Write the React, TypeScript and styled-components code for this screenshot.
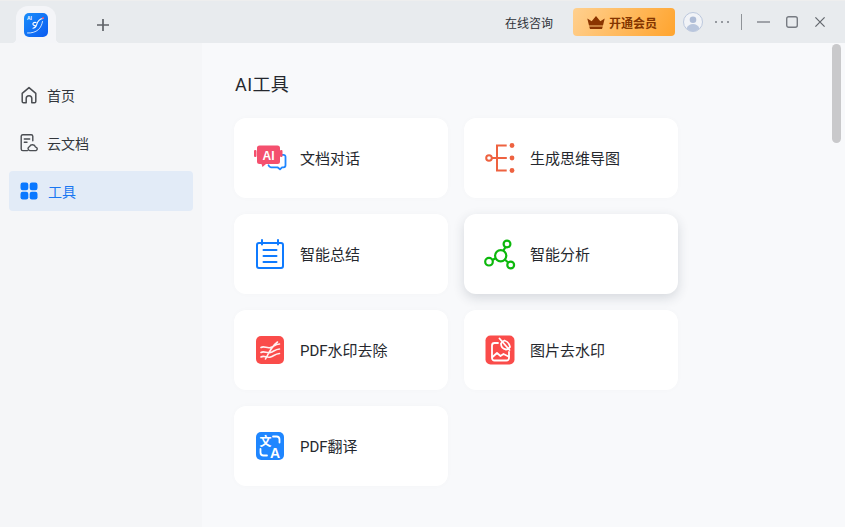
import React from "react";
import styled, { createGlobalStyle } from "styled-components";

const GlobalStyle = createGlobalStyle`
    html, body {
        margin: 0;
        padding: 0;
        height: 100%;
        overflow: hidden;
    }
    body {
        font-family: "Liberation Sans", "Noto Sans CJK SC", sans-serif;
        color: #2b2f36;
    }
`;

const Page = styled.div`
    width: 845px;
    height: 527px;
    display: flex;
    flex-direction: column;
    background-color: #f8f9fb;
`;

const TitleBar = styled.header`
    height: 43px;
    flex: none;
    display: flex;
    align-items: center;
    background-color: #e8ebee;
    border-top: 1px solid #eeeeee;
    box-sizing: border-box;
`;

const AppTab = styled.div`
    width: 40px;
    height: 37px;
    margin-left: 16px;
    align-self: flex-end;
    display: flex;
    justify-content: center;
    padding-top: 7px;
    box-sizing: border-box;
    background-color: #f4f5f8;
    border-radius: 12px 12px 0 0;
    position: relative;
    &::before, &::after {
        content: "";
        position: absolute;
        bottom: 0;
        width: 5px;
        height: 5px;
    }
    &::before {
        left: -5px;
        background: radial-gradient(circle at 0 0, transparent 5px, #f4f5f8 5.5px);
    }
    &::after {
        right: -5px;
        background: radial-gradient(circle at 100% 0, transparent 5px, #f4f5f8 5.5px);
    }
`;

const PlusButton = styled.div`
    margin: 5px 0 0 41px;
    width: 12px;
    height: 12px;
    display: flex;
    color: #5f6368;
`;

const Spacer = styled.div`
    flex: 1;
`;

const Consult = styled.span`
    font-size: 12px;
    color: #2f3238;
    margin-right: 20px;
    white-space: nowrap;
`;

const VipButton = styled.div`
    width: 102px;
    height: 28px;
    margin-right: 8px;
    padding-right: 4px;
    box-sizing: border-box;
    display: flex;
    align-items: center;
    justify-content: center;
    gap: 4px;
    border-radius: 4px;
    background: linear-gradient(120deg, #ffd08f 0%, #ffa42e 100%);
    color: #843500;
    font-size: 12px;
    font-weight: bold;
`;

const WindowControls = styled.div`
    display: flex;
    align-items: center;
    color: #62666c;
`;

const Divider = styled.div`
    width: 1px;
    height: 16px;
    background-color: #8f9398;
    margin: 0 15px 0 12px;
`;

const ControlIcon = styled.div<{ $gap?: number }>`
    display: flex;
    margin-right: ${(p) => p.$gap ?? 0}px;
`;

const Body = styled.div`
    flex: 1;
    display: flex;
    min-height: 0;
    position: relative;
`;

const Sidebar = styled.nav`
    width: 202px;
    flex: none;
    padding: 32px 8px 0 9px;
    box-sizing: border-box;
    display: flex;
    flex-direction: column;
    gap: 8px;
    background-color: #f5f6f8;
`;

const NavItem = styled.div<{ $active?: boolean }>`
    height: 40px;
    width: 184px;
    display: flex;
    align-items: center;
    gap: ${(p) => (p.$active ? 10 : 9)}px;
    padding-left: 11px;
    box-sizing: border-box;
    border-radius: 4px;
    font-size: 14px;
    color: ${(p) => (p.$active ? "#1a77f2" : "#33363c")};
    background-color: ${(p) => (p.$active ? "#e2ebf7" : "transparent")};
`;

const Main = styled.main`
    flex: 1;
    padding: 29px 0 0 32px;
`;

const Heading = styled.h1`
    margin: 0 0 21px 1px;
    height: 25px;
    line-height: 25px;
    font-size: 18px;
    font-weight: 400;
    letter-spacing: 0.4px;
    font-family: Roboto, "Noto Sans CJK SC", sans-serif;
    color: #25282e;
`;

const CardGrid = styled.div`
    display: grid;
    grid-template-columns: repeat(2, 214px);
    grid-auto-rows: 80px;
    gap: 16px;
`;

const Card = styled.div<{ $raised?: boolean }>`
    display: flex;
    align-items: center;
    gap: 12px;
    padding-left: 18px;
    border-radius: 12px;
    background-color: #ffffff;
    box-shadow: ${(p) =>
        p.$raised ? "0 4px 12px rgba(40, 50, 70, 0.16)" : "0 0 6px rgba(60, 70, 90, 0.02)"};
`;

const CardLabel = styled.span`
    margin-bottom: 2px;
    font-family: Roboto, "Noto Sans CJK SC", sans-serif;
    font-size: 15px;
    font-weight: 400;
    color: #25282e;
`;

const IconSlot = styled.div`
    width: 36px;
    height: 36px;
    flex: none;
    display: flex;
`;

const ScrollThumb = styled.div`
    position: absolute;
    top: 1px;
    right: 4px;
    width: 9px;
    height: 99px;
    border-radius: 5px;
    background-color: #c9c9cb;
`;

const Logo = () => (
    <svg width="24" height="24" viewBox="0 0 24 24">
        <defs>
            <linearGradient id="logoFill" x1="0" y1="0" x2="1" y2="1">
                <stop offset="0" stopColor="#1a8dfb" />
                <stop offset="1" stopColor="#0a5bf0" />
            </linearGradient>
        </defs>
        <rect width="24" height="24" rx="5" fill="url(#logoFill)" />
        <text x="3" y="6.6" fontSize="5" fontWeight="bold" fill="#fff" fontFamily="Liberation Sans">AI</text>
        <path d="M19 5.500c-3 .3-5.500 3-6.500 6.500-.5 1.600-1.800 3-3.500 3.300M12 9.500C10 9 8.500 10 9 11.500c.4 1.200 2.500 1 3 2" fill="none" stroke="#fff" strokeWidth="1.100" strokeLinecap="round" />
        <path d="M3.500 20c4 .2 8-.8 11-3.500 2-1.800 3.500-5 4-8" fill="none" stroke="#fff" strokeWidth=".8" strokeLinecap="round" />
        <circle cx="19" cy="5" r="1" fill="#f0506e" />
    </svg>
);

const HomeIcon = () => (
    <svg width="18" height="18" viewBox="0 0 18 18" fill="none" stroke="#4a4d52" strokeWidth="1.500" strokeLinejoin="round">
        <path d="M2.200 7.400 9 1.600l6.800 5.800v8a1.300 1.300 0 0 1-1.300 1.300h-2.700v-4.200a2.800 2.800 0 0 0-5.600 0v4.200H3.500a1.300 1.300 0 0 1-1.300-1.300z" />
    </svg>
);

const CloudDocIcon = () => (
    <svg width="18" height="18" viewBox="0 0 18 18" fill="none" stroke="#4a4d52" strokeWidth="1.400" strokeLinecap="round" strokeLinejoin="round">
        <path d="M7.500 16.600H2.800a1.600 1.600 0 0 1-1.600-1.600V2.200A1.600 1.600 0 0 1 2.800.8h8.400a1.600 1.600 0 0 1 1.600 1.500v4.500" />
        <path d="M4.300 5h5.400M4.300 8.200h2.700" />
        <path d="M9.800 16.600a2 2 0 0 1-.3-3.900 3.200 3.200 0 0 1 6 .4 1.800 1.800 0 0 1 .5 3.500z" />
    </svg>
);

const GridIcon = () => (
    <svg width="18" height="18" viewBox="0 0 18 18" fill="#0a78ff">
        <rect x="0.500" y="0.500" width="7.800" height="7.800" rx="2.200" />
        <rect x="9.700" y="0.500" width="7.800" height="7.800" rx="2.200" />
        <rect x="0.500" y="9.700" width="7.800" height="7.800" rx="2.200" />
        <rect x="9.700" y="9.700" width="7.800" height="7.800" rx="2.200" />
    </svg>
);

const ChatIcon = () => (
    <svg width="36" height="36" viewBox="0 0 36 36">
        <path d="M22 14.800h9.500a2 2 0 0 1 2 2v8.500a2 2 0 0 1-2 2h-1.500l-2 2-2.500-2H19a3 3 0 0 1-2.500-2" fill="none" stroke="#1f86ff" strokeWidth="1.800" strokeLinejoin="round" strokeLinecap="round" />
        <rect x="2" y="10" width="2.500" height="7" rx="1" fill="#f4506e" />
        <rect x="28" y="10" width="2.500" height="7" rx="1" fill="#f4506e" />
        <path d="M7.500 5.500h18a2.500 2.500 0 0 1 2.500 2.500v13.500a2.500 2.500 0 0 1-2.500 2.500H14l-3.500 3-1-3h-2A2.500 2.500 0 0 1 5 21.500V8a2.500 2.500 0 0 1 2.500-2.500z" fill="#f4506e" />
        <text x="16.500" y="19.500" textAnchor="middle" fontSize="12" fontWeight="bold" fill="#fff" fontFamily="Liberation Sans">AI</text>
    </svg>
);

const MindMapIcon = () => (
    <svg width="36" height="36" viewBox="0 0 36 36" fill="none" stroke="#ee6240" strokeWidth="2">
        <circle cx="7" cy="18" r="2.800" />
        <path d="M9.800 18h15M15 18V5.500h9.700M15 18v12.500h9.700" />
        <circle cx="30" cy="5.500" r="2.400" fill="#ee6240" stroke="none" />
        <circle cx="30" cy="18" r="2.400" fill="#ee6240" stroke="none" />
        <circle cx="30" cy="30.500" r="2.400" fill="#ee6240" stroke="none" />
    </svg>
);

const NoteIcon = () => (
    <svg width="36" height="36" viewBox="0 0 36 36" fill="none" stroke="#0f7bff" strokeWidth="2" strokeLinecap="round">
        <rect x="5" y="7" width="26" height="25" rx="2" />
        <path d="M10 4v4.500M26 4v4.500M11.500 14h13M11.500 20h13M11.500 26h13" />
    </svg>
);

const NetworkIcon = () => (
    <svg width="36" height="36" viewBox="0 0 36 36" fill="none" stroke="#0cb80c" strokeWidth="2.200">
        <circle cx="18.700" cy="19.700" r="5.600" />
        <circle cx="25" cy="8" r="3.400" />
        <circle cx="7" cy="25.700" r="3.800" />
        <circle cx="28.700" cy="29" r="3.400" />
        <path d="M21.300 14.800l2.200-3.800M10.400 24l3.200-1.700M22.800 23.500l3.300 3" />
    </svg>
);

const WatermarkIcon = () => (
    <svg width="36" height="36" viewBox="0 0 36 36">
        <rect x="4" y="4" width="28" height="28" rx="5" fill="#fa4c4a" />
        <path d="M9 15.500c3-2 6 1.200 9.500 0s4.500-3 9-3.500M9 20.500c3-2 6 1.200 9.500 0s4.500-3 9-3.500M9 25c3-2 6 1.200 9.500 0s4.500-3 9-3.500M25.500 10c-5 3.500-8 9-12 17" fill="none" stroke="#fff" strokeWidth="1.600" strokeLinecap="round" opacity=".92" />
    </svg>
);

const ImageMarkIcon = () => (
    <svg width="36" height="36" viewBox="0 0 36 36">
        <rect x="3.500" y="3.500" width="29" height="29" rx="5" fill="#fa4c4a" />
        <g fill="none" stroke="#fff" strokeWidth="1.800" strokeLinecap="round" strokeLinejoin="round">
            <path d="M16 11h-3.500A2.500 2.500 0 0 0 10 13.500v12.500a2.500 2.500 0 0 0 2.500 2.500h12a2.500 2.500 0 0 0 2.500-2.500v-6" />
            <path d="M10.500 25l4.500-4 3.500 3 3-2 5 2.500" />
            <path d="M17.500 6.500l10 11.500M22.500 8.500c2.500.8 5 3.500 5.500 6.500-1 1.500-2.500 2.500-4 2.500-3-.5-5-3-5-6 .5-1.300 2-2.500 3.500-3z" />
        </g>
    </svg>
);

const TranslateIcon = () => (
    <svg width="36" height="36" viewBox="0 0 36 36">
        <rect x="4" y="4" width="28" height="28" rx="5" fill="#1f86ff" />
        <text x="13.500" y="18" textAnchor="middle" fontSize="12" fontWeight="bold" fill="#fff" fontFamily="Noto Sans CJK SC">文</text>
        <text x="23" y="29.500" textAnchor="middle" fontSize="14" fontWeight="bold" fill="#fff" fontFamily="Liberation Sans">A</text>
        <path d="M21 8.500h3.500a3 3 0 0 1 3 3v3M15 27.500h-3.500a3 3 0 0 1-3-3v-3.500" fill="none" stroke="#fff" strokeWidth="1.800" strokeLinecap="round" />
    </svg>
);

const tools = [
    { label: "文档对话", icon: <ChatIcon /> },
    { label: "生成思维导图", icon: <MindMapIcon /> },
    { label: "智能总结", icon: <NoteIcon /> },
    { label: "智能分析", icon: <NetworkIcon />, raised: true },
    { label: "PDF水印去除", icon: <WatermarkIcon /> },
    { label: "图片去水印", icon: <ImageMarkIcon /> },
    { label: "PDF翻译", icon: <TranslateIcon /> },
];

const App = () => {
    return (
        <Page>
            <GlobalStyle />
            <TitleBar>
                <AppTab>
                    <Logo />
                </AppTab>
                <PlusButton>
                    <svg width="12" height="12" viewBox="0 0 12 12" stroke="currentColor" strokeWidth="1.700">
                        <path d="M6 0v12M0 6h12" />
                    </svg>
                </PlusButton>
                <Spacer />
                <Consult>在线咨询</Consult>
                <VipButton>
                    <svg width="18" height="13" viewBox="0 0 18 13" fill="#8a3400">
                        <path d="M.3 2.500l4.400 2.800L9 0l4.300 5.300 4.400-2.800-1.700 7H2zM2.200 10.600h13.600L15 13H3z" />
                    </svg>
                    开通会员
                </VipButton>
                <WindowControls>
                    <ControlIcon $gap={12}>
                        <svg width="20" height="20" viewBox="0 0 20 20">
                            <circle cx="10" cy="10" r="9.500" fill="#f1f3f7" stroke="#bcc8dd" />
                            <circle cx="10" cy="7.800" r="3.300" fill="#aebcd6" />
                            <path d="M3.500 16.500c1-3 3.500-4.500 6.500-4.500s5.500 1.500 6.500 4.500A9.500 9.500 0 0 1 10 19.500a9.500 9.500 0 0 1-6.500-3z" fill="#b9c6dd" />
                        </svg>
                    </ControlIcon>
                    <ControlIcon>
                        <svg width="14" height="2" viewBox="0 0 14 2" fill="#7a7e85">
                            <circle cx="1" cy="1" r="1" />
                            <circle cx="7" cy="1" r="1" />
                            <circle cx="13" cy="1" r="1" />
                        </svg>
                    </ControlIcon>
                    <Divider />
                    <ControlIcon $gap={16}>
                        <svg width="13" height="12" viewBox="0 0 13 12" stroke="#777b82" strokeWidth="1.300">
                            <path d="M0 6h13" />
                        </svg>
                    </ControlIcon>
                    <ControlIcon $gap={17}>
                        <svg width="12" height="12" viewBox="0 0 12 12" fill="none" stroke="#777b82" strokeWidth="1.400">
                            <rect x="0.700" y="0.700" width="10.600" height="10.600" rx="2" />
                        </svg>
                    </ControlIcon>
                    <ControlIcon $gap={20}>
                        <svg width="10" height="10" viewBox="0 0 10 10" stroke="#62666c" strokeWidth="1.200">
                            <path d="M.4.400l9.200 9.200M9.600.400L.4 9.600" />
                        </svg>
                    </ControlIcon>
                </WindowControls>
            </TitleBar>
            <Body>
                <Sidebar>
                    <NavItem>
                        <HomeIcon />
                        首页
                    </NavItem>
                    <NavItem>
                        <CloudDocIcon />
                        云文档
                    </NavItem>
                    <NavItem $active>
                        <GridIcon />
                        工具
                    </NavItem>
                </Sidebar>
                <Main>
                    <Heading>AI工具</Heading>
                    <CardGrid>
                        {tools.map((tool) => (
                            <Card key={tool.label} $raised={tool.raised}>
                                <IconSlot>{tool.icon}</IconSlot>
                                <CardLabel>{tool.label}</CardLabel>
                            </Card>
                        ))}
                    </CardGrid>
                </Main>
                <ScrollThumb />
            </Body>
        </Page>
    );
};

export default App;
